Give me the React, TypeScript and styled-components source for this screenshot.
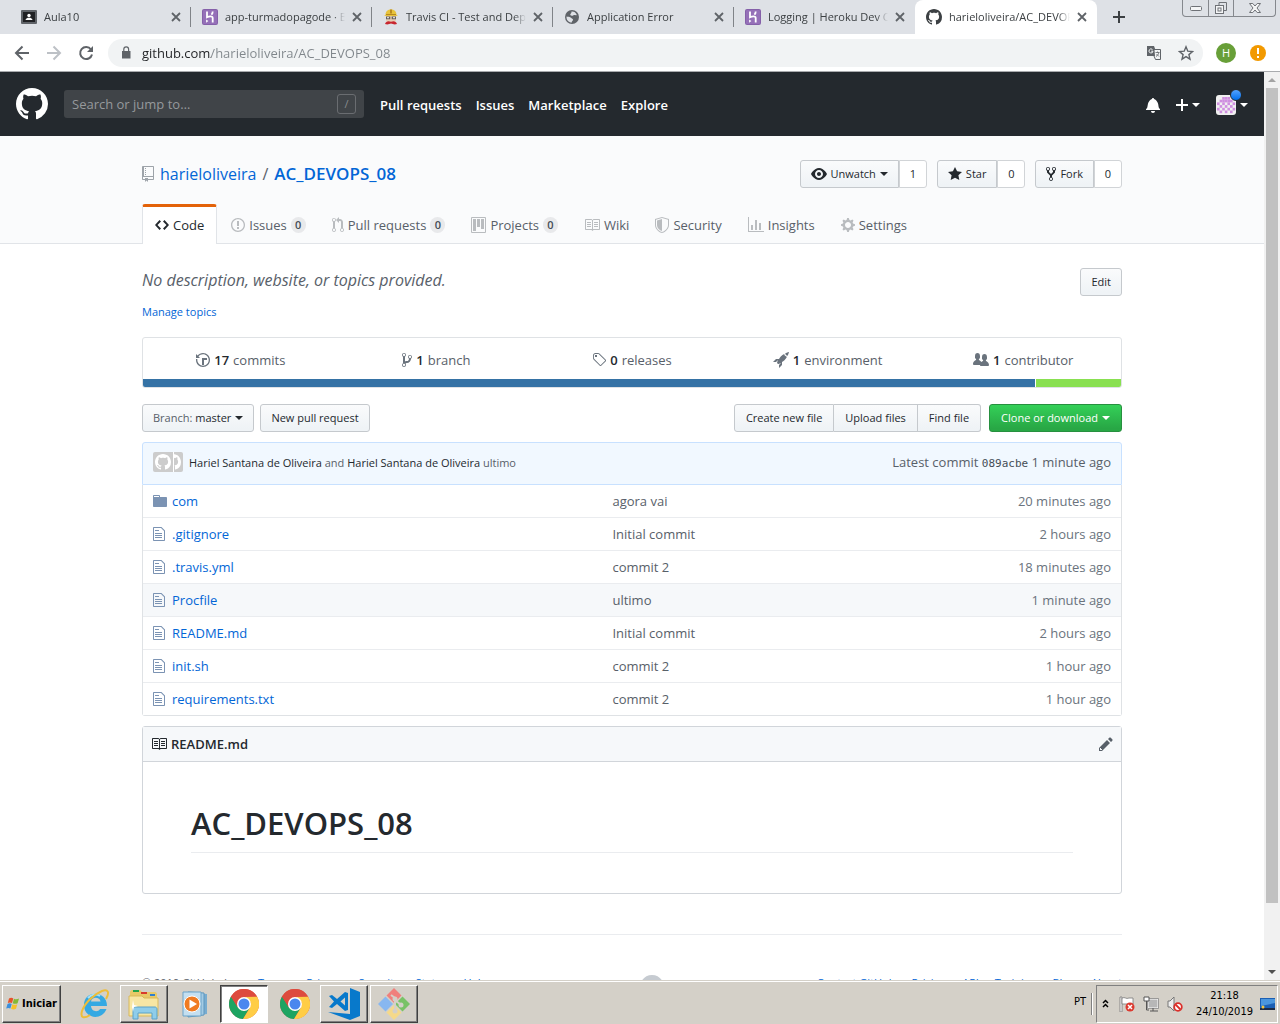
import React from "react";
import styled, { createGlobalStyle, css } from "styled-components";

const sans = `"Open Sans", "Noto Sans", sans-serif`;
const system = `"DejaVu Sans Condensed", "DejaVu Sans", sans-serif`;

const GlobalStyle = createGlobalStyle`
  *, *::before, *::after { box-sizing: border-box; }
  body { margin: 0; overflow: hidden; background: #fff; color: #24292e; font-family: ${sans}; font-size: 13px; line-height: 20px; }
  button, input { font-family: inherit; margin: 0; }
  a { color: #0366d6; text-decoration: none; }
  ul { list-style: none; margin: 0; padding: 0; }
`;

/* ---------- icons ---------- */

const paths = {
  github:
    "M8 0C3.58 0 0 3.58 0 8c0 3.54 2.29 6.53 5.47 7.59.4.07.55-.17.55-.38 0-.19-.01-.82-.01-1.49-2.01.37-2.53-.49-2.69-.94-.09-.23-.48-.94-.82-1.13-.28-.15-.68-.52-.01-.53.63-.01 1.08.58 1.23.82.72 1.21 1.87.87 2.33.66.07-.52.28-.87.51-1.07-1.78-.2-3.64-.89-3.64-3.95 0-.87.31-1.59.82-2.15-.08-.2-.36-1.02.08-2.12 0 0 .67-.21 2.2.82.64-.18 1.32-.27 2-.27.68 0 1.36.09 2 .27 1.53-1.04 2.2-.82 2.2-.82.44 1.1.16 1.92.08 2.12.51.56.82 1.27.82 2.15 0 3.07-1.87 3.75-3.65 3.95.29.25.54.73.54 1.48 0 1.07-.01 1.93-.01 2.2 0 .21.15.46.55.38A8.013 8.013 0 0 0 16 8c0-4.42-3.58-8-8-8z",
  repo: "M4 9H3V8h1v1zm0-3H3v1h1V6zm0-2H3v1h1V4zm0-2H3v1h1V2zm8-1v12c0 .55-.45 1-1 1H6v2l-1.5-1.5L3 16v-2H1c-.55 0-1-.45-1-1V1c0-.55.45-1 1-1h10c.55 0 1 .45 1 1zm-1 10H1v2h2v-1h3v1h5v-2zm0-10H2v9h9V1z",
  code: "M9.5 3L8 4.5 11.5 8 8 11.5 9.5 13 14 8 9.5 3zm-5 0L0 8l4.5 5L6 11.5 2.5 8 6 4.5 4.5 3z",
  issue:
    "M7 2.3c3.14 0 5.7 2.56 5.7 5.7s-2.56 5.7-5.7 5.7A5.71 5.71 0 0 1 1.3 8c0-3.14 2.56-5.7 5.7-5.7zM7 1C3.14 1 0 4.14 0 8s3.14 7 7 7 7-3.14 7-7-3.14-7-7-7zm1 3H6v5h2V4zm0 6H6v2h2v-2z",
  pull: "M11 11.28V5c-.03-.78-.34-1.47-.94-2.06C9.46 2.35 8.78 2.03 8 2H7V0L4 3l3 3V4h1c.27.02.48.11.69.31.21.2.3.42.31.69v6.28A1.993 1.993 0 0 0 10 15a1.993 1.993 0 0 0 1-3.72zm-1 2.92c-.66 0-1.2-.55-1.2-1.2 0-.65.55-1.2 1.2-1.2.65 0 1.2.55 1.2 1.2 0 .65-.55 1.2-1.2 1.2zM4 3c0-1.11-.89-2-2-2a1.993 1.993 0 0 0-1 3.72v6.56A1.993 1.993 0 0 0 2 15a1.993 1.993 0 0 0 1-3.72V4.72c.59-.34 1-.98 1-1.72zm-.8 10c0 .66-.55 1.2-1.2 1.2-.65 0-1.2-.55-1.2-1.2 0-.65.55-1.2 1.2-1.2.65 0 1.2.55 1.2 1.2zM2 4.2C1.34 4.2.8 3.65.8 3c0-.65.55-1.2 1.2-1.2.65 0 1.2.55 1.2 1.2 0 .65-.55 1.2-1.2 1.2z",
  project:
    "M10 12h3V2h-3v10zm-4-2h3V2H6v8zm-4 4h3V2H2v12zm-1 1h13V1H1v14zM14 0H1a1 1 0 0 0-1 1v14a1 1 0 0 0 1 1h13a1 1 0 0 0 1-1V1a1 1 0 0 0-1-1z",
  book: "M3 5h4v1H3V5zm0 3h4V7H3v1zm0 2h4V9H3v1zm11-5h-4v1h4V5zm0 2h-4v1h4V7zm0 2h-4v1h4V9zm2-6v9c0 .55-.45 1-1 1H9.5l-1 1-1-1H2c-.55 0-1-.45-1-1V3c0-.55.45-1 1-1h5.5l1 1 1-1H15c.55 0 1 .45 1 1zm-8 .5L7.5 3H2v9h6V3.5zm7-.5H9.5l-.5.5V12h6V3z",
  shield:
    "M0 2l7-2 7 2v6.02C14 12.69 8.69 16 7 16c-1.69 0-7-3.31-7-7.98V2zm1 .75L7 1l6 1.75v5.268C13 12.104 8.449 15 7 15c-1.449 0-6-2.896-6-6.982V2.75zm1 .75L7 2v12c-1.207 0-5-2.482-5-5.985V3.5z",
  graph: "M16 14v1H0V0h1v14h15zM5 13H3V8h2v5zm4 0H7V3h2v10zm4 0h-2V6h2v7z",
  gear: "M14 8.77v-1.6l-1.94-.64-.45-1.09.88-1.84-1.13-1.13-1.81.91-1.09-.45-.69-1.92h-1.6l-.63 1.94-1.11.45-1.84-.88-1.13 1.13.91 1.81-.45 1.09L0 7.23v1.59l1.94.64.45 1.09-.88 1.84 1.13 1.13 1.81-.91 1.09.45.69 1.92h1.59l.63-1.94 1.11-.45 1.84.88 1.13-1.13-.92-1.81.47-1.09L14 8.75v.02zM7 11c-1.66 0-3-1.34-3-3s1.34-3 3-3 3 1.34 3 3-1.34 3-3 3z",
  eye: "M8.06 2C3 2 0 8 0 8s3 6 8.06 6C13 14 16 8 16 8s-3-6-7.94-6zM8 12c-2.2 0-4-1.78-4-4 0-2.2 1.8-4 4-4 2.22 0 4 1.8 4 4 0 2.22-1.78 4-4 4zm2-4c0 1.11-.89 2-2 2-1.11 0-2-.89-2-2 0-1.11.89-2 2-2 1.11 0 2 .89 2 2z",
  star: "M14 6l-4.9-.64L7 1 4.9 5.36 0 6l3.6 3.26L2.67 14 7 11.67 11.33 14l-.93-4.74L14 6z",
  fork: "M8 1a1.993 1.993 0 0 0-1 3.72V6L5 8 3 6V4.72A1.993 1.993 0 0 0 2 1a1.993 1.993 0 0 0-1 3.72V6.5l3 3v1.78A1.993 1.993 0 0 0 5 15a1.993 1.993 0 0 0 1-3.72V9.5l3-3V4.72A1.993 1.993 0 0 0 8 1zM2 4.2C1.34 4.2.8 3.65.8 3c0-.65.55-1.2 1.2-1.2.65 0 1.2.55 1.2 1.2 0 .65-.55 1.2-1.2 1.2zm3 10c-.66 0-1.2-.55-1.2-1.2 0-.65.55-1.2 1.2-1.2.65 0 1.2.55 1.2 1.2 0 .65-.55 1.2-1.2 1.2zm3-10c-.66 0-1.2-.55-1.2-1.2 0-.65.55-1.2 1.2-1.2.65 0 1.2.55 1.2 1.2 0 .65-.55 1.2-1.2 1.2z",
  history:
    "M8 13H6V6h5v2H8v5zM7 1C4.81 1 2.87 2.02 1.59 3.59L0 2v4h4L2.5 4.5C3.55 3.17 5.17 2.3 7 2.3c3.14 0 5.7 2.56 5.7 5.7s-2.56 5.7-5.7 5.7A5.71 5.71 0 0 1 1.3 8c0-.34.03-.67.09-1H.08C.03 7.33 0 7.66 0 8c0 3.86 3.14 7 7 7s7-3.14 7-7-3.14-7-7-7z",
  branch:
    "M10 5c0-1.11-.89-2-2-2a1.993 1.993 0 0 0-1 3.72v.3c-.02.52-.23.98-.63 1.38-.4.4-.86.61-1.38.63-.83.02-1.48.16-2 .45V4.72a1.993 1.993 0 0 0-1-3.72C.88 1 0 1.89 0 3a2 2 0 0 0 1 1.72v6.56c-.59.35-1 .99-1 1.72 0 1.11.89 2 2 2 1.11 0 2-.89 2-2 0-.53-.2-1-.53-1.36.09-.06.48-.41.59-.47.25-.11.56-.17.94-.17 1.05-.05 1.95-.45 2.75-1.25S8.95 7.77 9 6.73h-.02C9.59 6.37 10 5.73 10 5zM2 1.8c.66 0 1.2.55 1.2 1.2 0 .65-.55 1.2-1.2 1.2C1.35 4.2.8 3.65.8 3c0-.65.55-1.2 1.2-1.2zm0 12.41c-.66 0-1.2-.55-1.2-1.2 0-.65.55-1.2 1.2-1.2.65 0 1.2.55 1.2 1.2 0 .65-.55 1.2-1.2 1.2zm6-8c-.66 0-1.2-.55-1.2-1.2 0-.65.55-1.2 1.2-1.2.65 0 1.2.55 1.2 1.2 0 .65-.55 1.2-1.2 1.2z",
  tag: "M7.73 1.73C7.26 1.26 6.62 1 5.96 1H3.5C2.13 1 1 2.13 1 3.5v2.47c0 .66.27 1.3.73 1.77l6.06 6.06c.39.39 1.02.39 1.41 0l4.59-4.59a.996.996 0 0 0 0-1.41L7.73 1.73zM2.38 7.09c-.31-.3-.47-.7-.47-1.13V3.5c0-.88.72-1.59 1.59-1.59h2.47c.42 0 .83.16 1.13.47l6.14 6.13-4.73 4.73-6.13-6.15zM3.01 3h2v2H3V3h.01z",
  rocket:
    "M12.17 3.83c-.27-.27-.47-.55-.63-.88-.16-.31-.27-.66-.34-1.02-.58.33-1.16.7-1.73 1.13-.58.44-1.14.94-1.69 1.48-.7.7-1.33 1.81-1.78 2.45H3L0 10h3l2-2c-.34.77-1.02 2.98-1 3l1 1c.02.02 2.23-.64 3-1l-2 2v3l3-3v-3c.64-.45 1.75-1.09 2.45-1.78.55-.55 1.05-1.13 1.47-1.7.44-.58.81-1.16 1.14-1.72-.36-.08-.7-.19-1.03-.34a3.39 3.39 0 0 1-.86-.63zM16 0s-.09.38-.3 1.06c-.2.7-.55 1.58-1.06 2.66-.7-.08-1.27-.33-1.66-.72-.39-.39-.63-.94-.7-1.64C13.36.84 14.23.48 14.92.28 15.62.08 16 0 16 0z",
  people:
    "M16 13c0 .44-.45 1-1 1H8c-.54 0-1-.45-1-1H1c-.54 0-1-.56-1-1 0-2.63 3-4 3-4s.23-.41 0-1c-.84-.62-1.06-.59-1-3 .06-2.42 1.37-3 2.5-3s2.44.58 2.5 3c.06 2.41-.16 2.38-1 3-.23.59 0 1 0 1s1.55.71 2.42 2.09C9.2 9.37 10 9 10 9s.23-.41 0-1c-.84-.62-1.06-.59-1-3 .06-2.42 1.37-3 2.5-3s2.44.58 2.5 3c.06 2.41-.16 2.38-1 3-.23.59 0 1 0 1s3 1.37 3 4z",
  file: "M6 5H2V4h4v1zM2 8h7V7H2v1zm0 2h7V9H2v1zm0 2h7v-1H2v1zm10-7.5V14c0 .55-.45 1-1 1H1c-.55 0-1-.45-1-1V2c0-.55.45-1 1-1h7.5L12 4.5zM11 5L8 2H1v12h10V5z",
  folder:
    "M13 4H7V3c0-.66-.31-1-1-1H1c-.55 0-1 .45-1 1v10c0 .55.45 1 1 1h12c.55 0 1-.45 1-1V5c0-.55-.45-1-1-1zM6 4H1V3h5v1z",
  pencil:
    "M0 12v3h3l8-8-3-3-8 8zm3 2H1v-2h1v1h1v1zm10.3-9.3L12 6 9 3l1.3-1.3a.996.996 0 0 1 1.41 0l1.59 1.59c.39.39.39 1.02 0 1.41z",
  bell: "M14 12v1H0v-1l.73-.58c.77-.77.81-2.55 1.19-4.42C2.69 3.23 6 2 6 2c0-.55.45-1 1-1s1 .45 1 1c0 0 3.39 1.23 4.16 5 .38 1.88.42 3.66 1.19 4.42l.66.58H14zm-7 4c1.11 0 2-.89 2-2H5c0 1.11.89 2 2 2z",
  plus: "M12 9H7v5H5V9H0V7h5V2h2v5h5v2z",
};

const iconWidths: Partial<Record<keyof typeof paths, number>> = {
  repo: 12, code: 14, issue: 14, pull: 12, project: 15, shield: 14, gear: 14, star: 14, fork: 10,
  history: 14, branch: 10, tag: 14, file: 12, folder: 14, pencil: 14, bell: 14, plus: 12,
};

type OcticonName = keyof typeof paths;

const Glyph = styled.svg`
  display: block;
  flex: none;
  fill: currentColor;
`;

function Octicon({ name, size = 16, color }: { name: OcticonName; size?: number; color?: string }) {
  const w = iconWidths[name] ?? 16;
  return (
    <Glyph width={(w * size) / 16} height={size} viewBox={`0 0 ${w} 16`} color={color} aria-hidden="true">
      <path fillRule="evenodd" d={paths[name]} />
    </Glyph>
  );
}

function Heroku() {
  return (
    <Glyph width="16" height="16" viewBox="0 0 16 16" aria-hidden="true">
      <rect width="16" height="16" rx="2" fill="#8560a9" />
      <rect x="1" y="1" width="14" height="14" rx="1" fill="#9570b8" />
      <path d="M5 2.500v5.800c1.600-.7 5.700-1.800 5.700.7v4.500M10.700 2.500c0 1.500-.5 2.400-1.300 3.200" fill="none" stroke="#fff" strokeWidth="1.800" />
      <path d="M4.100 10.500l2.300 1.600-2.300 1.700z" fill="#fff" />
    </Glyph>
  );
}

function Travis() {
  return (
    <Glyph width="16" height="16" viewBox="0 0 16 16" aria-hidden="true">
      <path d="M2.500 6C2.500 2 5 .5 8 .5S13.500 2 13.500 6l1.500 1H1z" fill="#e8c33c" />
      <path d="M7 .5h2v4H7zM3 5h10v1H3z" fill="#b98a1e" />
      <path d="M3 7h10v4c0 2-2 3.500-5 3.500S3 13 3 11z" fill="#e6cdb4" />
      <path d="M3 7.500h4.300v2.800H3zM8.700 7.500H13v2.800H8.700z" fill="#65615c" />
      <path d="M4 8.300h2v1H4zM10 8.300h2v1h-2z" fill="#fff" />
      <path d="M2 15c1-3 3.500-3.500 6-2.200C10.500 11.500 13 12 14 15c-2 .8-4 .4-6-.4-2 .8-4 1.200-6 .4z" fill="#c8262f" />
    </Glyph>
  );
}

function Globe() {
  return (
    <Glyph width="16" height="16" viewBox="0 0 16 16" aria-hidden="true">
      <circle cx="8" cy="8" r="7" fill="#5f6368" />
      <path d="M2.500 7.500c1.500.2 3.500.2 4.500 1.300.6 1 2 .8 2 2 0 1-1.200 1.200-1.200 2.700C4.500 13.500 2.300 11 2.500 7.500zM7.500 2.600c2.500-.2 4.300 1 5.300 3.400-1.300.6-2.200-.4-3.300.2-1 .8-2.600.7-3.200-.2C5.800 4.800 7.800 4.500 7.500 2.600z" fill="#dee1e6" />
    </Glyph>
  );
}

function Classroom() {
  return (
    <Glyph width="16" height="16" viewBox="0 0 16 16" aria-hidden="true">
      <rect y="1" width="16" height="14" rx="1" fill="#5f6368" />
      <rect x="2" y="3" width="12" height="10" fill="#202124" />
      <circle cx="8" cy="6.500" r="1.700" fill="#fff" />
      <path d="M4.500 11c.3-1.800 2-2.300 3.500-2.300s3.200.5 3.500 2.300z" fill="#fff" />
    </Glyph>
  );
}

function Cross() {
  return (
    <Glyph width="10" height="10" viewBox="0 0 10 10" color="#5f6368" aria-hidden="true">
      <path d="M1 1l8 8M9 1L1 9" stroke="currentColor" strokeWidth="1.800" />
    </Glyph>
  );
}

function ChromeLogo() {
  return (
    <Glyph width="30" height="30" viewBox="0 0 30 30" aria-hidden="true">
      <circle cx="15" cy="15" r="15" fill="#dd4b3e" />
      <path d="M2 7.500A15 15 0 0 0 14 30l7-11.500-6 3.500-6-3.500z" fill="#1da462" />
      <path d="M28 7.500A15 15 0 0 1 14 30l7-11.500L21.500 13 15 7.500z" fill="#ffcd46" />
      <path d="M2 7.500A15 15 0 0 1 28 7.500L15 8l-6.500 10z" fill="#dd4b3e" />
      <circle cx="15" cy="15" r="7" fill="#fff" />
      <circle cx="15" cy="15" r="5.500" fill="#4a87ee" />
    </Glyph>
  );
}

/* ---------- browser frame ---------- */

const Desktop = styled.div`
  display: flex;
  flex-direction: column;
  height: 100vh;
`;

const TabStrip = styled.div`
  display: flex;
  flex: none;
  align-items: stretch;
  height: 34px;
  padding-left: 10px;
  background: #dee1e6;
`;

const BrowserTab = styled.div<{ $active?: boolean }>`
  position: relative;
  display: flex;
  flex: 0 1 181px;
  min-width: 0;
  align-items: center;
  gap: 7px;
  padding: 0 10px 0 11px;
  color: #3c4043;
  font-size: 11px;
  &::after {
    content: "";
    position: absolute;
    right: 0;
    top: 7px;
    width: 1px;
    height: 20px;
    background: ${(p) => (p.$active ? "transparent" : "#808388")};
  }
  &:has(+ [aria-current])::after { background: transparent; }
  ${(p) =>
    p.$active &&
    css`
      flex-basis: 182px;
      background: #fff;
      border-radius: 8px 8px 0 0;
    `}
`;

const TabTitle = styled.span`
  flex: 1;
  min-width: 0;
  overflow: hidden;
  white-space: nowrap;
  mask-image: linear-gradient(to right, #000 calc(100% - 12px), transparent);
`;

const PlainButton = styled.button`
  display: flex;
  flex: none;
  align-items: center;
  justify-content: center;
  gap: 4px;
  padding: 0;
  border: 0;
  background: none;
  color: inherit;
`;

const NewTab = styled(PlainButton)`
  width: 44px;
  color: #3c4043;
`;

const WindowControls = styled.div`
  display: flex;
  align-self: flex-start;
  height: 17px;
  margin: 0 4px 0 auto;
  border: 1px solid #85888d;
  border-top: 0;
  border-radius: 0 0 4px 4px;
  color: #6f7277;
`;

const WindowButton = styled(PlainButton)<{ $wide?: boolean }>`
  width: ${(p) => (p.$wide ? "42px" : "25px")};
  & + button { border-left: 1px solid #85888d; }
`;

const Toolbar = styled.div`
  display: flex;
  flex: none;
  align-items: center;
  height: 38px;
  padding: 0 14px;
  border-bottom: 1px solid #a9abae;
  background: #fff;
  color: #5f6368;
`;

const NavButtons = styled.div`
  display: flex;
  gap: 16px;
  margin-right: 14px;
`;

const Omnibox = styled.label`
  display: flex;
  flex: 1;
  align-items: center;
  gap: 10px;
  height: 28px;
  margin-right: 13px;
  padding: 0 9px 0 12px;
  border-radius: 14px;
  background: #f1f3f4;
`;

const Address = styled.input`
  flex: 1;
  min-width: 0;
  padding: 0;
  border: 0;
  outline: 0;
  background: linear-gradient(to right, #202124 69px, #80868b 69px);
  background-clip: text;
  -webkit-text-fill-color: transparent;
  color: #202124;
  font-size: 13px;
`;

const OmniActions = styled.div`
  display: flex;
  gap: 16px;
`;

const Profile = styled(PlainButton)`
  width: 20px;
  height: 20px;
  border-radius: 50%;
  background: #689f38;
  color: #fff;
  font-size: 11px;
`;

const Alert = styled(PlainButton)`
  width: 16px;
  height: 16px;
  margin-left: 14px;
  border-radius: 50%;
  background: #f29900;
  color: #fff;
`;

const Viewport = styled.div`
  display: flex;
  flex: 1;
  min-height: 0;
`;

const Page = styled.div`
  flex: 1;
  min-width: 0;
  overflow: hidden;
  background: #fff;
`;

const Scrollbar = styled.div`
  display: flex;
  flex: none;
  flex-direction: column;
  align-items: center;
  justify-content: space-between;
  width: 16px;
  padding: 6px 0;
  background: #f1f1f1;
`;

const Thumb = styled.div`
  flex: none;
  width: 12px;
  height: 91%;
  margin: 6px 0 auto;
  background: #c1c1c1;
`;

/* ---------- site header ---------- */

const SiteHeader = styled.header`
  display: flex;
  align-items: center;
  height: 64px;
  padding: 0 16px;
  background: #24292e;
  color: #fff;
`;

const SearchBox = styled.label`
  display: flex;
  align-items: center;
  width: 300px;
  height: 28px;
  margin: 0 16px;
  padding: 0 8px;
  border-radius: 3px;
  background: #404448;
`;

const SearchInput = styled.input`
  flex: 1;
  min-width: 0;
  padding: 0;
  border: 0;
  outline: 0;
  background: none;
  color: #fff;
  font-size: 13px;
  &::placeholder { color: #96999c; opacity: 1; }
`;

const SlashKey = styled.span`
  width: 19px;
  height: 20px;
  border: 1px solid #6a6d71;
  border-radius: 3px;
  color: #888b8e;
  font-size: 11px;
  line-height: 18px;
  text-align: center;
`;

const SiteNav = styled.nav`
  display: flex;
  gap: 14px;
  padding-top: 2px;
  a { color: #fff; font-weight: 600; font-size: 13px; }
`;

const HeaderTools = styled.div`
  display: flex;
  align-items: center;
  gap: 16px;
  margin-left: auto;
  padding-top: 2px;
`;

const Caret = styled.span`
  flex: none;
  border: 4px solid transparent;
  border-top-color: currentColor;
  border-bottom: 0;
`;

const AvatarButton = styled(PlainButton)`
  position: relative;
`;

const UnreadDot = styled.span`
  position: absolute;
  left: 14px;
  top: -6px;
  width: 12px;
  height: 12px;
  border: 1px solid #24292e;
  border-radius: 50%;
  background: linear-gradient(#54a3ff, #006eed);
`;

/* ---------- repository head ---------- */

const RepoHead = styled.div`
  padding-top: 24px;
  border-bottom: 1px solid #e1e4e8;
  background: #fafbfc;
`;

const Container = styled.div`
  max-width: 980px;
  margin: 0 auto;
`;

const TitleRow = styled.div`
  display: flex;
  align-items: center;
  justify-content: space-between;
  height: 28px;
  margin-bottom: 16px;
`;

const RepoTitle = styled.h1`
  display: flex;
  align-items: center;
  gap: 6px;
  margin: 0;
  color: #586069;
  font-size: 16px;
  font-weight: 400;
  strong { font-size: 17px; font-weight: 600; }
`;

const Actions = styled.div<{ $gap?: number }>`
  display: flex;
  gap: ${(p) => p.$gap ?? 10}px;
`;

const Button = styled.button<{ $primary?: boolean }>`
  display: flex;
  align-items: center;
  gap: 4px;
  height: 28px;
  padding: 0 10px 1px;
  border: 1px solid ${(p) => (p.$primary ? "#27903f" : "#c5c9cd")};
  border-radius: 3px;
  background: ${(p) => (p.$primary ? "linear-gradient(#34d058, #28a745 90%)" : "linear-gradient(#fafbfc, #eff3f6 90%)")};
  color: ${(p) => (p.$primary ? "#fff" : "#24292e")};
  font-size: 11px;
  font-weight: 500;
  line-height: 14px;
  white-space: nowrap;
`;

const Muted = styled.span`
  color: #586069;
`;

const ButtonGroup = styled.div`
  display: flex;
  > * { border-radius: 0; }
  > *:first-child { border-radius: 3px 0 0 3px; }
  > *:last-child { border-radius: 0 3px 3px 0; }
  > * + * { border-left: 0; }
`;

const FileActions = styled.div`
  display: flex;
  gap: 8px;
  ${Button} { padding: 0 11px 1px; }
`;

const SocialCount = styled.a`
  padding: 0 9px;
  border: 1px solid #d1d4d7;
  background: #fff;
  color: #24292e;
  font-size: 11px;
  line-height: 25px;
  min-width: 28px;
  text-align: center;
`;

const RepoNav = styled.nav`
  display: flex;
  gap: 2px;
  margin-bottom: -1px;
`;

const RepoTab = styled.a<{ $active?: boolean }>`
  display: flex;
  align-items: center;
  gap: 4px;
  height: 40px;
  padding: 3px 12px 1px;
  color: ${(p) => (p.$active ? "#24292e" : "#586069")};
  svg { color: ${(p) => (p.$active ? "#24292e" : "#b9bcbf")}; }
  ${(p) =>
    p.$active &&
    css`
      padding: 0 12px 1px;
      border: 1px solid #e1e4e8;
      border-top: 3px solid #e36209;
      border-bottom: 0;
      border-radius: 3px 3px 0 0;
      background: #fff;
    `}
`;

const Counter = styled.span`
  min-width: 15px;
  padding: 0 4px;
  border-radius: 8px;
  background: #e8e9eb;
  color: #444d56;
  font-size: 11px;
  font-weight: 600;
  line-height: 16px;
  text-align: center;
`;

/* ---------- repository body ---------- */

const DescriptionRow = styled.div`
  display: flex;
  align-items: flex-start;
  justify-content: space-between;
  padding-top: 24px;
`;

const Description = styled.p`
  margin: 0;
  color: #586069;
  font-size: 16px;
  font-style: italic;
  line-height: 24px;
`;

const ManageTopics = styled.a`
  display: block;
  margin: 6px 0 15px;
  font-size: 11px;
`;

const Summary = styled.div`
  margin-bottom: 16px;
  border: 1px solid #dfe2e5;
  border-radius: 3px;
  overflow: hidden;
`;

const Stats = styled.ul`
  display: grid;
  grid-template-columns: repeat(5, 1fr);
  height: 41px;
`;

const Stat = styled.a`
  display: flex;
  align-items: center;
  justify-content: center;
  gap: 4px;
  height: 100%;
  padding-top: 2px;
  color: #586069;
  svg { color: #6a737d; }
  b { color: #24292e; font-weight: 600; }
`;

const Languages = styled.div`
  display: flex;
  gap: 1px;
  height: 8px;
`;

const Language = styled.span<{ $color: string; $share: number }>`
  flex: ${(p) => p.$share} 0 0;
  background: ${(p) => p.$color};
`;

const FileNav = styled.div`
  display: flex;
  justify-content: space-between;
  margin-bottom: 10px;
`;

const CommitBar = styled.div`
  display: flex;
  align-items: center;
  gap: 6px;
  height: 43px;
  padding: 0 10px 1px;
  border: 1px solid #c8e1ff;
  border-radius: 3px 3px 0 0;
  background: #f1f8ff;
  color: #586069;
`;

const AvatarStack = styled.span`
  display: flex;
  flex: none;
  width: 30px;
  height: 20px;
  margin-bottom: 2px;
  border-radius: 2px;
  overflow: hidden;
  background: #ccc;
`;

const Message = styled.span`
  font-size: 11px;
  a { color: #24292e; }
`;

const Latest = styled.span`
  margin-left: auto;
`;

const Sha = styled.a`
  color: #444d56;
  font-family: "DejaVu Sans Mono", "Liberation Mono", monospace;
  font-size: 11px;
`;

const FileTable = styled.table`
  width: 100%;
  border: 1px solid #dfe2e5;
  border-top: 0;
  border-radius: 0 0 3px 3px;
  border-spacing: 0;
  table-layout: fixed;
`;

const FileRow = styled.tr<{ $hover?: boolean }>`
  background: ${(p) => (p.$hover ? "#f6f8fa" : "#fff")};
  td { height: 32px; padding: 0; color: #586069; }
  tr + & td { height: 33px; border-top: 1px solid #eaecef; }
`;

const NameCell = styled.td`
  width: 48%;
`;

const AgeCell = styled.td`
  width: 160px;
  text-align: right;
  && { padding-right: 10px; color: #6a737d; }
`;

const FileName = styled.div`
  display: flex;
  align-items: center;
  padding-left: 10px;
  svg { color: #7b93b3; }
`;

const IconSlot = styled.span`
  width: 19px;
`;

const Readme = styled.section`
  margin-top: 10px;
  border: 1px solid #d1d5da;
  border-radius: 3px;
`;

const ReadmeHeader = styled.div`
  display: flex;
  align-items: center;
  justify-content: space-between;
  height: 35px;
  padding: 0 8px;
  border-bottom: 1px solid #d1d5da;
  background: #f6f8fa;
`;

const ReadmeTitle = styled.h3`
  display: flex;
  align-items: center;
  gap: 4px;
  margin: 0;
  font-size: 13px;
  font-weight: 600;
`;

const Article = styled.article`
  padding: 40px 48px;
  h1 {
    margin: 0;
    padding-bottom: 8px;
    border-bottom: 1px solid #eaecef;
    font-size: 31px;
    font-weight: 600;
    line-height: 42px;
  }
`;

const Footer = styled.footer`
  display: flex;
  align-items: flex-start;
  justify-content: space-between;
  margin-top: 40px;
  padding-top: 40px;
  border-top: 1px solid #eaecef;
  color: #586069;
  font-size: 11px;
  line-height: 16px;
`;

const FooterLinks = styled.ul`
  display: flex;
  gap: 16px;
`;

/* ---------- taskbar ---------- */

const Taskbar = styled.footer`
  display: flex;
  flex: none;
  align-items: center;
  height: 44px;
  padding: 2px 2px 0;
  border-top: 1px solid #d4d0c8;
  box-shadow: inset 0 1px #fff;
  background: #d4d0c8;
  color: #000;
  font-family: ${system};
  font-size: 11px;
`;

const TaskButton = styled(PlainButton)<{ $look?: "raised" | "pressed" }>`
  width: ${(p) => (p.$look ? "48px" : "50px")};
  height: 38px;
  margin-right: ${(p) => (p.$look ? "2px" : "0")};
  ${(p) =>
    p.$look === "raised" &&
    css`
      border: 1px solid;
      border-color: #fff #404040 #404040 #fff;
      box-shadow: inset -1px -1px #808080;
    `}
  ${(p) =>
    p.$look === "pressed" &&
    css`
      border: 1px solid;
      border-color: #404040 #fff #fff #404040;
      box-shadow: inset 1px 1px #808080;
      background: #fff;
    `}
`;

const StartButton = styled(TaskButton)`
  width: 59px;
  margin-right: 9px;
  gap: 0;
  font-family: ${system};
  font-size: 11px;
  font-weight: 700;
`;

const InputLanguage = styled.span`
  margin: 0 5px 4px auto;
`;

const Tray = styled.div`
  display: flex;
  align-items: center;
  height: 38px;
  padding: 0 2px 0 5px;
  border: 1px solid;
  border-color: #808080 #fff #fff #808080;
`;

const TrayDivider = styled.span`
  width: 2px;
  height: 22px;
  margin-right: 3px;
  border-left: 1px solid #808080;
  border-right: 1px solid #fff;
`;

const TrayIcons = styled.div`
  display: flex;
  gap: 8px;
  margin-left: 10px;
`;

const Clock = styled.time`
  margin: 0 7px 0 13px;
  line-height: 16px;
  text-align: center;
`;

/* ---------- data ---------- */

const browserTabs = [
  { title: "Aula10", icon: <Classroom /> },
  { title: "app-turmadopagode · Bu", icon: <Heroku /> },
  { title: "Travis CI - Test and Dep", icon: <Travis /> },
  { title: "Application Error", icon: <Globe /> },
  { title: "Logging | Heroku Dev Ce", icon: <Heroku /> },
  { title: "harieloliveira/AC_DEVOP", icon: <Octicon name="github" />, active: true },
];

const repoTabs: { icon: OcticonName; label: string; count?: number; active?: boolean }[] = [
  { icon: "code", label: "Code", active: true },
  { icon: "issue", label: "Issues", count: 0 },
  { icon: "pull", label: "Pull requests", count: 0 },
  { icon: "project", label: "Projects", count: 0 },
  { icon: "book", label: "Wiki" },
  { icon: "shield", label: "Security" },
  { icon: "graph", label: "Insights" },
  { icon: "gear", label: "Settings" },
];

const social: { icon: OcticonName; label: string; count: number; menu?: boolean }[] = [
  { icon: "eye", label: "Unwatch", count: 1, menu: true },
  { icon: "star", label: "Star", count: 0 },
  { icon: "fork", label: "Fork", count: 0 },
];

const stats: { icon: OcticonName; count: number; label: string }[] = [
  { icon: "history", count: 17, label: "commits" },
  { icon: "branch", count: 1, label: "branch" },
  { icon: "tag", count: 0, label: "releases" },
  { icon: "rocket", count: 1, label: "environment" },
  { icon: "people", count: 1, label: "contributor" },
];

const files = [
  { name: "com", message: "agora vai", age: "20 minutes ago", folder: true },
  { name: ".gitignore", message: "Initial commit", age: "2 hours ago" },
  { name: ".travis.yml", message: "commit 2", age: "18 minutes ago" },
  { name: "Procfile", message: "ultimo", age: "1 minute ago", hover: true },
  { name: "README.md", message: "Initial commit", age: "2 hours ago" },
  { name: "init.sh", message: "commit 2", age: "1 hour ago" },
  { name: "requirements.txt", message: "commit 2", age: "1 hour ago" },
];

const identicon = ["..###..", ".#####.", "#.#.#.#", ".#.#.#.", "#.#.#.#", ".#.#.#."];

/* ---------- sections ---------- */

function Browser() {
  return (
    <>
      <TabStrip>
        {browserTabs.map((t) => (
          <BrowserTab key={t.title} $active={t.active} aria-current={t.active ? "page" : undefined}>
            {t.icon}
            <TabTitle>{t.title}</TabTitle>
            <PlainButton aria-label={`Close ${t.title}`}>
              <Cross />
            </PlainButton>
          </BrowserTab>
        ))}
        <NewTab aria-label="New tab">
          <Glyph width="12" height="12" viewBox="0 0 12 12">
            <path d="M5 0h2v5h5v2H7v5H5V7H0V5h5z" />
          </Glyph>
        </NewTab>
        <WindowControls>
          <WindowButton aria-label="Minimize">
            <Glyph width="12" height="5" viewBox="0 0 12 5">
              <rect x=".5" y=".5" width="11" height="4" rx="1" fill="#f4f5f6" stroke="currentColor" />
            </Glyph>
          </WindowButton>
          <WindowButton aria-label="Restore">
            <Glyph width="12" height="12" viewBox="0 0 12 12" stroke="currentColor">
              <path d="M4 3V.5h7.500v8H9" fill="none" />
              <rect x=".5" y="3.500" width="8" height="8" fill="#f4f5f6" />
              <rect x="3" y="6" width="3" height="3" fill="none" />
            </Glyph>
          </WindowButton>
          <WindowButton $wide aria-label="Close">
            <Glyph width="12" height="10" viewBox="0 0 12 10">
              <path d="M.5.500h3.300L6 3 8.200.5h3.300L8 5l3.500 4.500H8.200L6 7 3.800 9.500H.5L4 5z" fill="#f4f5f6" stroke="currentColor" />
            </Glyph>
          </WindowButton>
        </WindowControls>
      </TabStrip>
      <Toolbar>
        <NavButtons>
          <PlainButton aria-label="Back">
            <Glyph width="16" height="16" viewBox="0 0 16 16">
              <path d="M8.500 1.500L2 8l6.500 6.500M2 8h13" fill="none" stroke="currentColor" strokeWidth="2" />
            </Glyph>
          </PlainButton>
          <PlainButton aria-label="Forward">
            <Glyph width="16" height="16" viewBox="0 0 16 16" color="#bdc1c6">
              <path d="M7.500 1.500L14 8l-6.500 6.500M14 8H1" fill="none" stroke="currentColor" strokeWidth="2" />
            </Glyph>
          </PlainButton>
          <PlainButton aria-label="Reload">
            <Glyph width="16" height="16" viewBox="0 0 16 16">
              <path d="M13 4.500A6 6 0 1 0 14 9.500" fill="none" stroke="currentColor" strokeWidth="2" />
              <path d="M15 1v6H9z" />
            </Glyph>
          </PlainButton>
        </NavButtons>
        <Omnibox>
          <Glyph width="12" height="14" viewBox="0 0 12 14" aria-hidden="true">
            <path d="M2 5h8.500v7.500H2z" />
            <path d="M3.800 5.500V3.200a2.400 2.400 0 0 1 4.800 0v2.300" fill="none" stroke="currentColor" strokeWidth="1.200" />
          </Glyph>
          <Address aria-label="Address" defaultValue="github.com/harieloliveira/AC_DEVOPS_08" />
          <OmniActions>
            <PlainButton aria-label="Translate this page">
              <Glyph width="16" height="16" viewBox="0 0 16 16">
                <path d="M1 1h7l1.500 4h-1L9 11H1z" />
                <path d="M8.500 4.500h6v10h-5L8 11" fill="none" stroke="currentColor" />
                <path d="M9.500 7.500h4M11.500 6.500v1M12.800 7.500c-.3 2-1.300 3-2.800 4M10.500 9l2.500 2.500" fill="none" stroke="currentColor" strokeWidth=".8" />
                <path d="M6.500 4.600a2 2 0 1 0 .5 1.600H5.200" fill="none" stroke="#f1f3f4" />
              </Glyph>
            </PlainButton>
            <PlainButton aria-label="Bookmark this page">
              <Glyph width="16" height="16" viewBox="0 0 16 16">
                <path d="M8 1.800l1.800 4.400 4.700.4-3.600 3 1.100 4.600L8 11.700l-4 2.500 1.100-4.600-3.600-3 4.700-.4z" fill="none" stroke="currentColor" strokeWidth="1.400" />
              </Glyph>
            </PlainButton>
          </OmniActions>
        </Omnibox>
        <Profile aria-label="Profile H">H</Profile>
        <Alert aria-label="Update available">
          <Glyph width="2" height="10" viewBox="0 0 2 10">
            <path d="M0 0h2v6H0zM0 8h2v2H0z" />
          </Glyph>
        </Alert>
      </Toolbar>
    </>
  );
}

function Header() {
  return (
    <SiteHeader>
      <a href="#home" aria-label="Homepage">
        <Octicon name="github" size={32} color="#fff" />
      </a>
      <SearchBox>
        <SearchInput type="text" placeholder="Search or jump to…" aria-label="Search or jump to" />
        <SlashKey>/</SlashKey>
      </SearchBox>
      <SiteNav>
        {["Pull requests", "Issues", "Marketplace", "Explore"].map((l) => (
          <a key={l} href={`#${l}`}>{l}</a>
        ))}
      </SiteNav>
      <HeaderTools>
        <PlainButton aria-label="Notifications"><Octicon name="bell" /></PlainButton>
        <PlainButton aria-label="Create new"><Octicon name="plus" /><Caret /></PlainButton>
        <AvatarButton aria-label="View profile and more">
          <Glyph width="20" height="20" viewBox="0 0 20 20">
            <rect width="20" height="20" rx="3" fill="#f0f0f0" />
            {identicon.map((row, y) =>
              [...row].map((c, x) =>
                c === "#" ? <rect key={`${x}-${y}`} x={1 + x * 2.6} y={2 + y * 2.7} width="2.600" height="2.700" fill="#cf8fe0" /> : null
              )
            )}
          </Glyph>
          <UnreadDot />
          <Caret />
        </AvatarButton>
      </HeaderTools>
    </SiteHeader>
  );
}

function Repository() {
  return (
    <>
      <RepoHead>
        <Container>
          <TitleRow>
            <RepoTitle>
              <Octicon name="repo" color="#9da3a9" />
              <a href="#owner">harieloliveira</a>
              <span>/</span>
              <strong><a href="#repo">AC_DEVOPS_08</a></strong>
            </RepoTitle>
            <Actions>
              {social.map((s) => (
                <ButtonGroup key={s.label}>
                  <Button>
                    <Octicon name={s.icon} />
                    {s.label}
                    {s.menu && <Caret />}
                  </Button>
                  <SocialCount href={`#${s.label}`}>{s.count}</SocialCount>
                </ButtonGroup>
              ))}
            </Actions>
          </TitleRow>
          <RepoNav>
            {repoTabs.map((t) => (
              <RepoTab key={t.label} href={`#${t.label}`} $active={t.active}>
                <Octicon name={t.icon} />
                {t.label}
                {t.count !== undefined && <Counter>{t.count}</Counter>}
              </RepoTab>
            ))}
          </RepoNav>
        </Container>
      </RepoHead>

      <Container as="main">
        <DescriptionRow>
          <Description>No description, website, or topics provided.</Description>
          <Button>Edit</Button>
        </DescriptionRow>
        <ManageTopics href="#topics">Manage topics</ManageTopics>

        <Summary>
          <Stats>
            {stats.map((s) => (
              <li key={s.label}>
                <Stat href={`#${s.label}`}>
                  <Octicon name={s.icon} />
                  <b>{s.count}</b>
                  {s.label}
                </Stat>
              </li>
            ))}
          </Stats>
          <Languages>
            <Language $color="#3572a5" $share={91.3} />
            <Language $color="#89e051" $share={8.7} />
          </Languages>
        </Summary>

        <FileNav>
          <Actions $gap={6}>
            <Button aria-haspopup="menu"><span><Muted>Branch:</Muted> master</span><Caret /></Button>
            <Button>New pull request</Button>
          </Actions>
          <FileActions>
            <ButtonGroup>
              <Button>Create new file</Button>
              <Button>Upload files</Button>
              <Button>Find file</Button>
            </ButtonGroup>
            <Button $primary aria-haspopup="menu">Clone or download<Caret /></Button>
          </FileActions>
        </FileNav>

        <CommitBar>
          <AvatarStack>
            <Glyph width="20" height="20" viewBox="0 0 20 20">
              <g transform="translate(2 2)"><path d={paths.github} fill="#fff" /></g>
            </Glyph>
            <Glyph width="10" height="20" viewBox="10 0 10 20">
              <path d="M10 0h1v20h-1z" fill="#fff" />
              <g transform="translate(2 2)"><path d={paths.github} fill="#fff" /></g>
            </Glyph>
          </AvatarStack>
          <Message>
            <a href="#author">Hariel Santana de Oliveira</a> and <a href="#committer">Hariel Santana de Oliveira</a> ultimo
          </Message>
          <Latest>
            Latest commit <Sha href="#commit">089acbe</Sha> 1 minute ago
          </Latest>
        </CommitBar>
        <FileTable>
          <tbody>
            {files.map((f) => (
              <FileRow key={f.name} $hover={f.hover}>
                <NameCell>
                  <FileName>
                    <IconSlot><Octicon name={f.folder ? "folder" : "file"} /></IconSlot>
                    <a href={`#${f.name}`}>{f.name}</a>
                  </FileName>
                </NameCell>
                <td>{f.message}</td>
                <AgeCell>{f.age}</AgeCell>
              </FileRow>
            ))}
          </tbody>
        </FileTable>

        <Readme>
          <ReadmeHeader>
            <ReadmeTitle><Octicon name="book" />README.md</ReadmeTitle>
            <PlainButton aria-label="Edit this file"><Octicon name="pencil" color="#586069" /></PlainButton>
          </ReadmeHeader>
          <Article><h1>AC_DEVOPS_08</h1></Article>
        </Readme>

        <Footer>
          <FooterLinks>
            <li>© 2019 GitHub, Inc.</li>
            {["Terms", "Privacy", "Security", "Status", "Help"].map((l) => (
              <li key={l}><a href={`#${l}`}>{l}</a></li>
            ))}
          </FooterLinks>
          <Octicon name="github" size={24} color="#c6cbd1" />
          <FooterLinks>
            {["Contact GitHub", "Pricing", "API", "Training", "Blog", "About"].map((l) => (
              <li key={l}><a href={`#${l}`}>{l}</a></li>
            ))}
          </FooterLinks>
        </Footer>
      </Container>
    </>
  );
}

function WindowsTaskbar() {
  return (
    <Taskbar>
      <StartButton $look="raised">
        <Glyph width="16" height="16" viewBox="0 0 16 16">
          <path d="M3 2.500c1.500-1 3-.9 4.300-.1L6 7C4.700 6.200 3.200 6.200 1.800 7z" fill="#e6532b" />
          <path d="M8 2.700c1.500.8 3.300.8 5-.1l-1.400 4.600c-1.600.9-3.400.8-4.900 0z" fill="#84b935" />
          <path d="M1.500 7.900c1.500-.8 2.900-.8 4.200 0l-1.300 4.600c-1.300-.8-2.700-.8-4.200 0z" fill="#3b8fdc" />
          <path d="M6.400 8.200c1.500.8 3.200.8 4.900 0L10 12.800c-1.600.8-3.400.8-4.900 0z" fill="#f6c129" />
        </Glyph>
        Iniciar
      </StartButton>
      <TaskButton aria-label="Internet Explorer">
        <Glyph width="30" height="30" viewBox="0 0 30 30">
          <path d="M4 16C4 1 27 1 27 17H11c.5 6 7 6.500 9 3h6.500C22 32 4 30 4 16zM11 12.500h9.500c-.5-5-9-5-9.500 0z" fill="#35a9e3" fillRule="evenodd" />
          <path d="M8 9c3-3.500 8-4.500 12-2" stroke="#a5e1fa" strokeWidth="2" fill="none" />
          <path d="M26 10c4-7 2-10-4-8C15 5 5 13 2 22c-2 7 2 8 8 4" fill="none" stroke="#eebd3a" strokeWidth="2" />
        </Glyph>
      </TaskButton>
      <TaskButton $look="raised" aria-label="File Explorer">
        <Glyph width="32" height="32" viewBox="0 0 32 32">
          <path d="M2 4c0-1 1-2 2-2h8l2 2h13c1 0 2 1 2 2v22H2z" fill="#e8c968" />
          <path d="M5 2h6v2H5z" fill="#22a34a" /><path d="M13 4h6v2h-6z" fill="#d83b2d" /><path d="M22 6h5v2h-5z" fill="#2f7fd0" />
          <path d="M1 8h13l2 2h14v18H1z" fill="#f7e6a4" stroke="#d9b95a" />
          <path d="M5 31V21c0-1 1-2 2-2h20c1 0 2 1 2 2v10h-5v-6H10v6z" fill="#8fcdea" stroke="#5ba2c9" />
          <path d="M5 12l1 5 4 1-4 1-1 5-1-5" fill="#fff" />
        </Glyph>
      </TaskButton>
      <TaskButton aria-label="Media Player">
        <Glyph width="30" height="30" viewBox="0 0 30 30">
          <path d="M11 4l16 1v20l-16 2z" fill="#78acd0" /><path d="M8 3l16 1v22l-16 2z" fill="#a4cbe4" stroke="#5e96bd" />
          <path d="M3 3h18v24H3z" fill="#c4dff0" stroke="#6aa3c9" />
          <circle cx="12" cy="15" r="8" fill="#f07b22" stroke="#fff" /><path d="M9.500 10.500L17 15l-7.500 4.500z" fill="#fff" />
        </Glyph>
      </TaskButton>
      <TaskButton $look="pressed" aria-label="Chrome, active window"><ChromeLogo /></TaskButton>
      <TaskButton aria-label="Chrome"><ChromeLogo /></TaskButton>
      <TaskButton $look="raised" aria-label="Visual Studio Code">
        <Glyph width="34" height="34" viewBox="0 0 34 34">
          <path d="M23 1l10 4v24l-10 4L1 25l22 2z" fill="#0879cb" />
          <path d="M18 5l3 1v17l-3 1-8-7-5 4-3-1 5-5.500L2 9l3-1 5 4zM18 10.500L13.500 14.500l4.500 4z" fill="#0879cb" fillRule="evenodd" />
        </Glyph>
      </TaskButton>
      <TaskButton $look="raised" aria-label="Git Bash">
        <Glyph width="32" height="32" viewBox="0 0 32 32">
          <path d="M16 0l7.500 7.500L16 15 8.500 7.500z" fill="#f0807c" /><path d="M24.500 8.500L32 16l-7.500 7.500L17 16z" fill="#79c267" />
          <path d="M7.500 8.500L15 16l-7.500 7.500L0 16z" fill="#88b7f0" /><path d="M16 17l7.500 7.500L16 32l-7.500-7.500z" fill="#f5d98a" />
          <path d="M13 7l4 3v14M17 12l6 5" fill="none" stroke="#d4d0c8" strokeWidth="2" />
          <circle cx="17" cy="11" r="2.500" fill="#d4d0c8" /><circle cx="17" cy="23" r="2.500" fill="#d4d0c8" /><circle cx="23" cy="17" r="2.500" fill="#d4d0c8" />
        </Glyph>
      </TaskButton>

      <InputLanguage>PT</InputLanguage>
      <TrayDivider />
      <Tray>
        <PlainButton aria-label="Show hidden icons">
          <Glyph width="7" height="9" viewBox="0 0 7 9">
            <path d="M1 4l2.500-2.500L6 4M1 8l2.500-2.500L6 8" fill="none" stroke="#000" strokeWidth="1.500" />
          </Glyph>
        </PlainButton>
        <TrayIcons>
          <Glyph width="16" height="16" viewBox="0 0 16 16" aria-hidden="true">
            <path d="M1 1h2v15H1z" fill="#fff" stroke="#777" strokeWidth=".8" />
            <path d="M3 2c3-1.500 4 1.500 7 0h4v6H3z" fill="#fff" stroke="#777" strokeWidth=".8" />
            <circle cx="11" cy="11" r="4.500" fill="#dc3a30" /><path d="M9 9l4 4M13 9l-4 4" stroke="#fff" strokeWidth="1.500" />
          </Glyph>
          <Glyph width="16" height="16" viewBox="0 0 16 16" aria-hidden="true">
            <rect x="5" y="3" width="10" height="9" fill="#b7b7b7" stroke="#fff" /><path d="M4.500 2.500h11v10h-11z" fill="none" stroke="#777" strokeWidth=".7" />
            <path d="M7 15h8M10 12v3" stroke="#555" /><path d="M1 1h5v4H1z" fill="#fff" stroke="#555" /><path d="M3.500 5v9H6" fill="none" stroke="#555" />
          </Glyph>
          <Glyph width="16" height="16" viewBox="0 0 16 16" aria-hidden="true">
            <path d="M1 5h2l4-4v14l-4-4H1z" fill="#eee" stroke="#777" />
            <circle cx="11" cy="11" r="3.800" fill="#fff" stroke="#db2f2a" strokeWidth="1.800" /><path d="M8.500 8.500l5 5" stroke="#db2f2a" strokeWidth="1.800" />
          </Glyph>
        </TrayIcons>
        <Clock dateTime="2019-10-24T21:18">21:18<br />24/10/2019</Clock>
        <PlainButton aria-label="Show desktop">
          <Glyph width="15" height="14" viewBox="0 0 15 14">
            <path d="M0 1h15v11H0z" fill="#1b5fb4" /><path d="M1 2h14v4L1 9z" fill="#4b96dd" /><path d="M0 11h15v2H0z" fill="#1c2b45" />
            <circle cx="3" cy="10" r="1.500" fill="#f4c63d" />
          </Glyph>
        </PlainButton>
      </Tray>
    </Taskbar>
  );
}

export default function App() {
  return (
    <Desktop>
      <GlobalStyle />
      <Browser />
      <Viewport>
        <Page>
          <Header />
          <Repository />
        </Page>
        <Scrollbar aria-hidden="true">
          <Glyph width="8" height="4" viewBox="0 0 8 4" color="#a3a3a3"><path d="M0 4l4-4 4 4z" /></Glyph>
          <Thumb />
          <Glyph width="8" height="4" viewBox="0 0 8 4" color="#505050"><path d="M0 0l4 4 4-4z" /></Glyph>
        </Scrollbar>
      </Viewport>
      <WindowsTaskbar />
    </Desktop>
  );
}
